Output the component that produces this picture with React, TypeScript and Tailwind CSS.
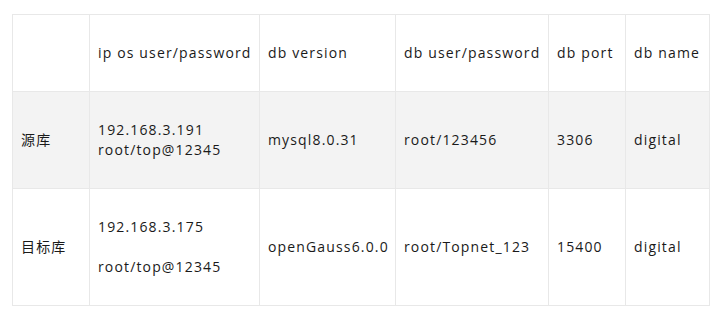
import React from "react";

const font = { fontFamily: '"Open Sans", "Noto Sans CJK SC", sans-serif' };

export default function App() {
  const td = "border border-[#e8e8e8] px-[8px] py-[28px] align-middle leading-[20px] whitespace-nowrap";
  return (
    <div className="w-[721px] h-[317px] bg-white pt-[14px] pl-[12px]">
      <table
        className="table-fixed border-collapse w-[697px] text-[14px] tracking-[1.15px] text-[#1a1a1a]"
        style={font}
      >
        <colgroup>
          <col className="w-[77px]" />
          <col className="w-[170px]" />
          <col className="w-[136px]" />
          <col className="w-[153px]" />
          <col className="w-[77px]" />
          <col className="w-[84px]" />
        </colgroup>
        <tbody>
          <tr className="bg-white">
            <td className={td}></td>
            <td className={td}>ip os user/password</td>
            <td className={td}>db version</td>
            <td className={td}>db user/password</td>
            <td className={td}>db port</td>
            <td className={td}>db name</td>
          </tr>
          <tr className="bg-[#f3f3f3]">
            <td className={td}>源库</td>
            <td className={td}>
              192.168.3.191
              <br />
              root/top@12345
            </td>
            <td className={td}>mysql8.0.31</td>
            <td className={td}>root/123456</td>
            <td className={td}>3306</td>
            <td className={td}>digital</td>
          </tr>
          <tr className="bg-white">
            <td className={td}>目标库</td>
            <td className={td}>
              192.168.3.175
              <br />
              <br />
              root/top@12345
            </td>
            <td className={td}>openGauss6.0.0</td>
            <td className={td}>root/Topnet_123</td>
            <td className={td}>15400</td>
            <td className={td}>digital</td>
          </tr>
        </tbody>
      </table>
    </div>
  );
}
